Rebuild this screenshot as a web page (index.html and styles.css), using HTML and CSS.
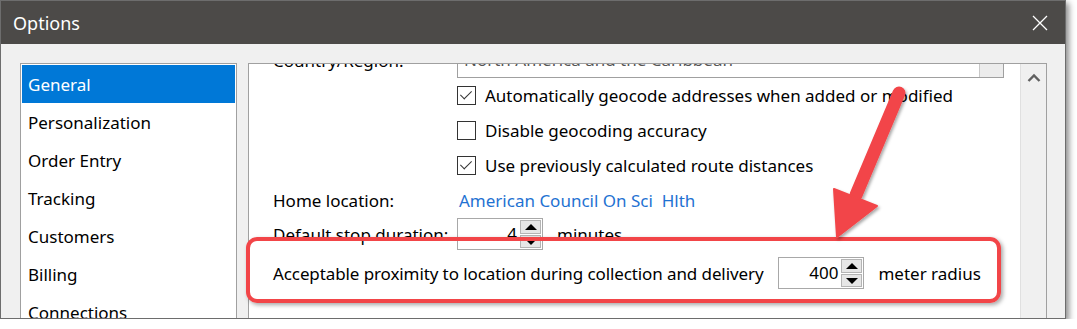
FILE: index.html
```html
<!DOCTYPE html>
<html lang="en">
<head>
    <meta charset="UTF-8">
    <title>Options</title>
    <link rel="stylesheet" href="styles.css">
</head>
<body>
    <div class="window">
        <!-- Title bar -->
        <div class="titlebar">
            <span class="title">Options</span>
            <svg class="close" width="16" height="16" viewBox="0 0 16 16">
                <path d="M1 1L15 15M15 1L1 15" stroke="#fff" stroke-width="1.3" fill="none"/>
            </svg>
        </div>

        <div class="body">
            <!-- Category list -->
            <ul class="nav">
                <li class="selected">General</li>
                <li>Personalization</li>
                <li>Order Entry</li>
                <li>Tracking</li>
                <li>Customers</li>
                <li>Billing</li>
                <li>Connections</li>
            </ul>

            <!-- Settings panel, scrolled a little -->
            <div class="panel">
                <div class="view">
                    <div class="content">
                        <div class="row row-country">
                            <span class="label">Country/Region:</span>
                            <div class="dropdown">
                                <span>North America and the Caribbean</span>
                                <span class="drop-btn"></span>
                            </div>
                        </div>
                        <div class="row">
                            <span class="label"></span>
                            <label class="check"><span class="box checked"></span>Automatically geocode addresses when added or modified</label>
                        </div>
                        <div class="row">
                            <span class="label"></span>
                            <label class="check"><span class="box"></span>Disable geocoding accuracy</label>
                        </div>
                        <div class="row">
                            <span class="label"></span>
                            <label class="check"><span class="box checked"></span>Use previously calculated route distances</label>
                        </div>
                        <div class="row row-home">
                            <span class="label">Home location:</span>
                            <a class="link" href="#">American Council On Sci&nbsp; Hlth</a>
                        </div>
                        <div class="row row-stop">
                            <span class="label">Default stop duration:</span>
                            <div class="spin">
                                <span class="value">4</span>
                                <span class="spin-btns"><span class="up"></span><span class="down"></span></span>
                            </div>
                            <span class="unit">minutes</span>
                        </div>
                        <div class="row row-prox">
                            <span class="prox-label">Acceptable proximity to location during collection and delivery</span>
                            <div class="spin">
                                <span class="value">400</span>
                                <span class="spin-btns"><span class="up"></span><span class="down"></span></span>
                            </div>
                            <span class="unit">meter radius</span>
                        </div>
                    </div>
                </div>
                <div class="scrollbar">
                    <svg width="14" height="10" viewBox="0 0 14 10">
                        <path d="M1.5 8L7 2.5L12.5 8" stroke="#606060" stroke-width="2.4" fill="none"/>
                    </svg>
                </div>
            </div>
        </div>

        <!-- Annotation: red callout box and arrow -->
        <div class="callout"></div>
        <svg class="arrow" width="1077" height="329" viewBox="0 0 1077 329">
            <defs>
                <filter id="shade" x="-20%" y="-20%" width="140%" height="140%">
                    <feDropShadow dx="1.5" dy="2" stdDeviation="1.8" flood-color="#000" flood-opacity="0.35"/>
                </filter>
            </defs>
            <g filter="url(#shade)" fill="#f24548" stroke="#f24548">
                <line x1="899" y1="93" x2="856" y2="195" stroke-width="13" stroke-linecap="round"/>
                <polygon points="837,237 834,189 877,206" stroke-width="2" stroke-linejoin="round"/>
            </g>
        </svg>
    </div>
</body>
</html>
```

FILE: styles.css
```css
body {
    margin: 0;
    background: #fff;
    font-family: 'Noto Sans', 'Open Sans', sans-serif;
    font-size: 17px;
    color: #000;
}

.window {
    position: relative;
    width: 1064px;
    height: 317px;
    border: 1px solid #6d6d6d;
    background: #f0f0f0;
    box-shadow: 3px 3px 6px rgba(0, 0, 0, 0.45);
    overflow: hidden;
}

.titlebar {
    height: 43px;
    background: #4c4a48;
    color: #fff;
    display: flex;
    align-items: center;
    justify-content: space-between;
    padding: 0 17px 0 12px;
}

.title {
    font-size: 18px;
}

.body {
    display: flex;
    gap: 11px;
    padding: 19px 18px 0 19px;
    height: 260px;
}

/* left category list */
.nav {
    list-style: none;
    margin: 0;
    padding: 1px;
    width: 213px;
    flex: none;
    background: #fff;
    border: 1px solid #a0a0a0;
    height: 400px;
}

.nav li {
    height: 38px;
    line-height: 40px;
    padding-left: 6px;
}

.nav li.selected {
    background: #0078d7;
    color: #fff;
}

/* right settings panel */
.panel {
    flex: 1;
    display: flex;
    background: #fff;
    border: 1px solid #a0a0a0;
    height: 400px;
}

.view {
    flex: 1;
    overflow: hidden;
}

.content {
    margin-top: -21px;
    padding-left: 24px;
}

.row {
    display: flex;
    align-items: center;
    height: 35px;
}

.label {
    width: 184px;
    flex: none;
}

.row-country {
    height: 35px;
    align-items: flex-end;
}

.row-country .label {
    align-self: flex-start;
    line-height: 20px;
    padding-top: 8px;
}

.dropdown {
    width: 539px;
    height: 24px;
    border: 1px solid #a0a0a0;
    display: flex;
    justify-content: space-between;
    color: #555;
    padding-left: 6px;
    line-height: 14px;
}

.drop-btn {
    width: 23px;
    background: #ececec;
    border-left: 1px solid #c8c8c8;
}

.check {
    display: flex;
    align-items: center;
    gap: 9px;
}

.box {
    width: 17px;
    height: 17px;
    border: 1px solid #333;
    background: #fff;
    position: relative;
}

.box.checked::after {
    content: "";
    position: absolute;
    left: 5px;
    top: 1px;
    width: 5px;
    height: 10px;
    border: solid #333;
    border-width: 0 1.5px 1.5px 0;
    transform: rotate(45deg);
}

.row-home {
    height: 34px;
}

.link {
    color: #1f72d2;
    text-decoration: none;
    padding-left: 2px;
}

.row-stop {
    height: 34px;
}

.row-prox {
    margin-top: 5px;
    height: 34px;
}

.prox-label {
    letter-spacing: -0.1px;
}

.spin {
    display: flex;
    width: 84px;
    height: 30px;
    border: 1px solid #a8a8a8;
    background: #fff;
    flex: none;
}

.row-prox .spin {
    margin-left: 15px;
}

.value {
    flex: 1;
    text-align: right;
    line-height: 30px;
    padding-right: 3px;
}

.spin-btns {
    width: 21px;
    display: flex;
    flex-direction: column;
    gap: 1px;
    padding: 1px 1px 1px 0;
}

.spin-btns span {
    flex: 1;
    background: #e6e6e6;
    border: 1px solid #b4b4b4;
    position: relative;
}

.spin-btns span::after {
    content: "";
    position: absolute;
    left: 4px;
    top: 3px;
    border-left: 6px solid transparent;
    border-right: 6px solid transparent;
}

.spin-btns .up::after {
    border-bottom: 6px solid #000;
}

.spin-btns .down::after {
    border-top: 6px solid #000;
}

.unit {
    margin-left: 14px;
}

.scrollbar {
    width: 25px;
    background: #f0f0f0;
    border-left: 1px solid #e0e0e0;
    display: flex;
    justify-content: center;
    padding-top: 9px;
}

.scrollbar svg {
    display: block;
}

/* annotation overlay */
.callout {
    position: absolute;
    left: 245px;
    top: 236px;
    width: 747px;
    height: 58px;
    border: 4px solid #f24548;
    border-radius: 11px;
    box-shadow: 2px 2px 4px rgba(0, 0, 0, 0.35);
}

.arrow {
    position: absolute;
    left: -1px;
    top: -1px;
    pointer-events: none;
}
```
